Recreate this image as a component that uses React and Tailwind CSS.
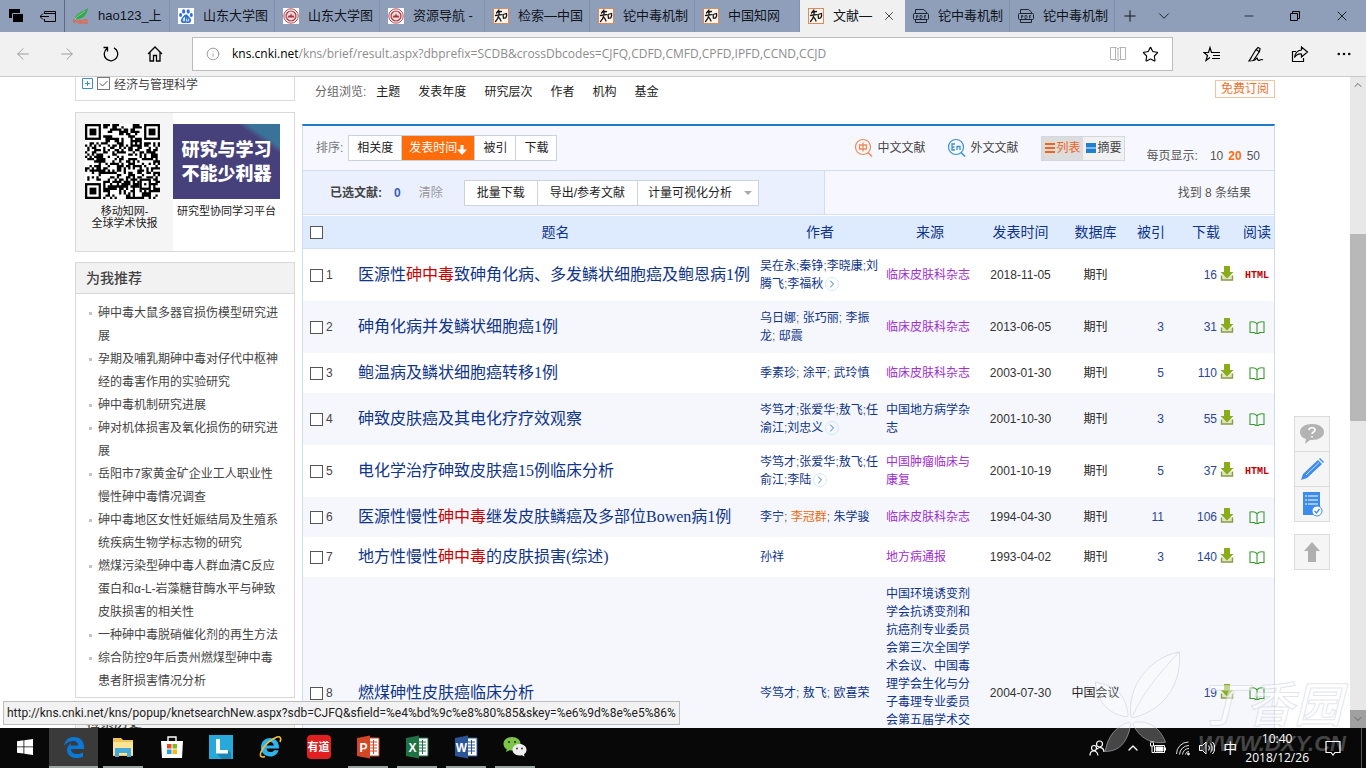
import { useState } from 'react';
import { ArrowLeft, ArrowRight, House, Info, Star, Plus, ChevronDown, ChevronUp, ChevronRight, Minus, X, Ellipsis } from 'lucide-react';

const TABS = [
  { icon: 'leaf', text: 'hao123_上' },
  { icon: 'baidu', text: '山东大学图' },
  { icon: 'seal', text: '山东大学图' },
  { icon: 'seal', text: '资源导航 -' },
  { icon: 'cnki', text: '检索—中国' },
  { icon: 'cnki', text: '铊中毒机制' },
  { icon: 'cnki', text: '中国知网' },
  { icon: 'cnki', text: '文献—', active: true },
  { icon: 'pdf', text: '铊中毒机制' },
  { icon: 'pdf', text: '铊中毒机制' },
];

const GROUPS = ['主题', '发表年度', '研究层次', '作者', '机构', '基金'];

const RECOMMENDED = [
  '砷中毒大鼠多器官损伤模型研究进展',
  '孕期及哺乳期砷中毒对仔代中枢神经的毒害作用的实验研究',
  '砷中毒机制研究进展',
  '砷对机体损害及氧化损伤的研究进展',
  '岳阳市7家黄金矿企业工人职业性慢性砷中毒情况调查',
  '砷中毒地区女性妊娠结局及生殖系统疾病生物学标志物的研究',
  '燃煤污染型砷中毒人群血清C反应蛋白和α-L-岩藻糖苷酶水平与砷致皮肤损害的相关性',
  '一种砷中毒脱硝催化剂的再生方法',
  '综合防控9年后贵州燃煤型砷中毒患者肝损害情况分析',
];

// text between asterisks is the highlighted keyword
const RESULTS = [
  { title: '医源性*砷中毒*致砷角化病、多发鳞状细胞癌及鲍恩病1例', authors: ['吴在永;秦铮;李晓康;刘', '腾飞;李福秋'], more: true, source: ['临床皮肤科杂志'], visited: true, date: '2018-11-05', db: '期刊', cited: '', down: 16, html: true },
  { title: '砷角化病并发鳞状细胞癌1例', authors: ['乌日娜; 张巧丽; 李振', '龙; 邸震'], source: ['临床皮肤科杂志'], visited: true, date: '2013-06-05', db: '期刊', cited: 3, down: 31 },
  { title: '鲍温病及鳞状细胞癌转移1例', authors: ['季素珍; 涂平; 武玲慎'], source: ['临床皮肤科杂志'], visited: true, date: '2003-01-30', db: '期刊', cited: 5, down: 110 },
  { title: '砷致皮肤癌及其电化疗疗效观察', authors: ['岑笃才;张爱华;敖飞;任', '渝江;刘忠义'], more: true, source: ['中国地方病学杂', '志'], date: '2001-10-30', db: '期刊', cited: 3, down: 55 },
  { title: '电化学治疗砷致皮肤癌15例临床分析', authors: ['岑笃才;张爱华;敖飞;任', '俞江;李陆'], more: true, source: ['中国肿瘤临床与', '康复'], visited: true, date: '2001-10-19', db: '期刊', cited: 5, down: 37, html: true },
  { title: '医源性慢性*砷中毒*继发皮肤鳞癌及多部位Bowen病1例', authors: ['李宁; 李冠群; 朱学骏'], source: ['临床皮肤科杂志'], visited: true, date: '1994-04-30', db: '期刊', cited: 11, down: 106 },
  { title: '地方性慢性*砷中毒*的皮肤损害(综述)', authors: ['孙祥'], source: ['地方病通报'], visited: true, date: '1993-04-02', db: '期刊', cited: 3, down: 140 },
  {
    title: '燃煤砷性皮肤癌临床分析',
    authors: ['岑笃才; 敖飞; 欧喜荣'],
    source: ['中国环境诱变剂', '学会抗诱变剂和', '抗癌剂专业委员', '会第三次全国学', '术会议、中国毒', '理学会生化与分', '子毒理专业委员', '会第五届学术交', '流会论文集'],
    date: '2004-07-30', db: '中国会议', cited: '', down: 19, tall: true,
  },
];

function TabIcon({ type }) {
  if (type === 'leaf') {
    return (
      <svg className="size-4 shrink-0" viewBox="0 0 16 16">
        <path d="M2 11C2 6 7 5 15 0c-1 7-5 12-13 11z" fill="#35a853" />
        <path d="M2 11c3-4 7-5 10-8" stroke="#8bd17c" fill="none" />
        <path d="M1 11v4M1 13h3v2M6 13h3v2H6zM11 12h3v3h-3z" stroke="#e06a50" strokeWidth="1.4" fill="none" />
      </svg>
    );
  }
  if (type === 'baidu') {
    return (
      <svg className="size-4 shrink-0" viewBox="0 0 16 16">
        <rect width="16" height="16" fill="#fff" />
        <g fill="#2f6fe0">
          <ellipse cx="5.6" cy="3.4" rx="1.6" ry="2.2" />
          <ellipse cx="10.2" cy="3.4" rx="1.6" ry="2.2" />
          <ellipse cx="2.6" cy="7" rx="1.5" ry="2" />
          <ellipse cx="13.3" cy="7" rx="1.5" ry="2" />
          <path d="M8 6.5c2 0 2.600 2 4 3.400 2.200 2 1 5.100-1.500 5.100-1 0-1.600-.3-2.500-.3s-1.500.3-2.500.3C3 15 1.800 12 4 9.900 5.400 8.500 6 6.500 8 6.500z" />
        </g>
        <path d="M6.500 9v4H5.300v-2.500h1.200M8.500 10.500V13h2.200v-2.500" stroke="#fff" strokeWidth=".8" fill="none" />
      </svg>
    );
  }
  if (type === 'seal') {
    return (
      <svg className="size-4 shrink-0" viewBox="0 0 16 16">
        <rect width="16" height="16" fill="#fff" />
        <circle cx="8" cy="8" r="7.200" fill="none" stroke="#b5444c" strokeWidth="1" />
        <circle cx="8" cy="8" r="5" fill="#f3dcdc" stroke="#a8323c" strokeWidth="1.200" />
        <path d="M4.500 9.500L6 7l1 1 1-3 1 3 1-1 1.500 2.500z" fill="#a8323c" />
      </svg>
    );
  }
  if (type === 'pdf') {
    return (
      <svg className="size-4 shrink-0" viewBox="0 0 16 16" fill="none" stroke="#1b2430" strokeWidth="1">
        <path d="M2.500 5V1.500h8L13.500 4v1M2.500 12v2.500h11V12" />
        <rect x=".5" y="5.500" width="15" height="6" rx="1" />
        <path d="M3.500 10.500v-3h1.300v1.500H3.500M7 7.500v3h1.200l.8-1V8l-.8-.5zM11.500 10.500v-3H13M11.500 9H13" strokeWidth=".8" />
      </svg>
    );
  }
  return (
    <svg className="size-4 shrink-0" viewBox="0 0 16 16">
      <rect x=".5" y=".5" width="15" height="15" fill="#fff6ee" stroke="#e08a5a" />
      <path d="M6 2L3.500 5M4.500 4l4-.500M2.500 7.500l6-.800M6.200 4C6 8 5 11 2.500 13.500M5.500 9c1 1 2 2.500 2.500 4M10 6.500l3.500-1c.5 1.500 0 3-.8 4.500L10.500 10.300z" stroke="#161616" strokeWidth="1.300" fill="none" strokeLinecap="round" />
    </svg>
  );
}

function TabBar() {
  return (
    <div className="flex h-8 shrink-0 bg-[#8f9fba] text-[#10151c]">
      <div className="flex w-[65px] shrink-0 items-center gap-4 border-r border-[#5d6a82] pl-2">
        <button aria-label="标签页" className="size-4">
          <svg viewBox="0 0 16 16" className="size-4">
            <path d="M1 1h11v9H1z" fill="#000" />
            <path d="M4.500 5.500h10v8h-10z" fill="#000" stroke="#8f9fba" />
            <path d="M5 6h10v8H5z" fill="#000" />
          </svg>
        </button>
        <button aria-label="搁置标签页" className="size-4">
          <svg viewBox="0 0 16 16" className="size-4" fill="none" stroke="#000">
            <path d="M4.500 6V3.500h11v10h-11V11M4.500 5.500h11M0 8.500h9M3 5.500l-3 3 3 3" />
          </svg>
        </button>
      </div>
      {TABS.map((tab, i) => (
        <button
          key={i}
          className={`flex w-[105px] min-w-0 items-center gap-[9px] border-r pl-2 text-[13px] ${tab.active ? 'border-[#f0f0f0] bg-[#f0f0f0]' : 'border-[#8091ae]'}`}
        >
          <TabIcon type={tab.icon} />
          <span className={`overflow-hidden text-left whitespace-nowrap ${tab.active ? 'w-10' : 'w-[66px]'}`}>{tab.text}</span>
          {tab.active && <X size={14} strokeWidth={1.3} className="shrink-0" />}
        </button>
      ))}
      <div className="flex grow items-center gap-4 pl-1.5">
        <button aria-label="新建标签页"><Plus size={18} strokeWidth={1.3} /></button>
        <button aria-label="标签页列表"><ChevronDown size={18} strokeWidth={1.2} /></button>
      </div>
      <div className="flex shrink-0 items-center gap-8 pr-4">
        <button aria-label="最小化"><Minus size={14} strokeWidth={1.4} /></button>
        <button aria-label="还原">
          <svg viewBox="0 0 14 14" className="size-3.5" fill="none" stroke="#000">
            <path d="M2.500 4.500h7v7h-7zM4.500 4.500v-2h7v7h-2" />
          </svg>
        </button>
        <button aria-label="关闭"><X size={16} strokeWidth={1.4} /></button>
      </div>
    </div>
  );
}

function AddressBar() {
  const [url, setUrl] = useState('/kns/brief/result.aspx?dbprefix=SCDB&crossDbcodes=CJFQ,CDFD,CMFD,CPFD,IPFD,CCND,CCJD');
  return (
    <div className="flex h-[45px] shrink-0 items-center border-b border-[#cbcbcb] bg-[#f1f1f1] pr-[13px] pl-[14px]">
      <div className="flex w-[178px] shrink-0 items-center gap-[26px]">
        <button aria-label="后退" className="text-[#9a9a9a]"><ArrowLeft size={18} strokeWidth={1.3} /></button>
        <button aria-label="前进" className="text-[#9a9a9a]"><ArrowRight size={18} strokeWidth={1.3} /></button>
        <button aria-label="刷新">
          <svg viewBox="0 0 18 18" className="size-[18px]" fill="none" stroke="#000" strokeWidth="1.300">
            <path d="M5 3.500A6.800 6.800 0 1 0 12 2.900M1.500 2.500h4v4" />
          </svg>
        </button>
        <button aria-label="主页">
          <svg viewBox="0 0 18 18" className="size-[18px]" fill="none" stroke="#000" strokeWidth="1.300">
            <path d="M2 9l7-7 7 7M4 7.500V16h3.500v-5.500h3V16H14V7.500" />
          </svg>
        </button>
      </div>
      <div className="flex h-[34px] grow items-center border border-[#bdbdbd] bg-white px-[13px] font-['Open_Sans',sans-serif] text-xs">
        <Info size={14} strokeWidth={1.2} className="mr-3 shrink-0 text-[#777]" />
        <label htmlFor="url" className="text-black">kns.cnki.net</label>
        <input id="url" value={url} onChange={e => setUrl(e.target.value)} className="min-w-0 grow text-[#8c8c8c] outline-none" />
        <button aria-label="阅读视图" className="mr-4">
          <svg viewBox="0 0 16 16" className="size-4" fill="none" stroke="#b4b4b4">
            <path d="M.500 1.500h6L8 3l1.500-1.500h6v12h-6L8 15l-1.500-1.500h-6zM8 3v11M5.500 2v11M10.500 2v11" />
          </svg>
        </button>
        <button aria-label="收藏"><Star size={17} strokeWidth={1.6} strokeLinejoin="miter" /></button>
      </div>
      <div className="ml-[30px] flex shrink-0 items-center gap-[26px]">
        <button aria-label="收藏夹">
          <svg viewBox="0 0 18 18" className="size-[18px]" fill="none" stroke="#000" strokeWidth="1.200">
            <path d="M10 7.500H8.500L7 2.500 5.500 7.500H1l3.500 3-1.500 5 4-3M10 7.500h7M10 10.500h7M9 13.500h8" />
          </svg>
        </button>
        <button aria-label="添加备注">
          <svg viewBox="0 0 18 18" className="size-[18px]" fill="none" stroke="#000" strokeWidth="1.200">
            <path d="M2 16L9 4.500l2-2 2 1-.500 3L6 16M4.500 12.500l-2.500 3.500c2 0 6-.500 7-2s1.500-1 1.500 0 1 2 2.500 1 2-.500 3 0M9 4.500l3 2" />
          </svg>
        </button>
        <button aria-label="共享">
          <svg viewBox="0 0 18 18" className="size-[18px]" fill="none" stroke="#000" strokeWidth="1.200">
            <path d="M5 6.500H1.500v10h11V13M10.500 5V2l6 5-6 5V9c-3-.500-5 .500-7 3.500C4 8 6.500 5.500 10.500 5z" />
          </svg>
        </button>
        <button aria-label="更多"><Ellipsis size={18} strokeWidth={1.4} /></button>
      </div>
    </div>
  );
}

// finder squares in three corners, the rest is a fixed pattern
function QrCode() {
  const n = 33;
  const cells = [];
  let seed = 77;
  for (let y = 0; y < n; y++) {
    for (let x = 0; x < n; x++) {
      seed = (seed * 1103515245 + 12345) % 2147483648;
      const corner = (x < 8 && y < 8) || (x > n - 9 && y < 8) || (x < 8 && y > n - 9);
      const align = x > 23 && x < 29 && y > 23 && y < 29;
      if (!corner && !align && seed / 2147483648 > 0.48) cells.push(`M${x} ${y}h1v1h-1z`);
    }
  }
  return (
    <svg viewBox="0 0 33 33" className="ml-[9px] size-[75px] self-start bg-white">
      <path d={cells.join('')} />
      {[[0, 0], [26, 0], [0, 26]].map(([x, y]) => (
        <g key={`${x}-${y}`}>
          <rect x={x + 0.5} y={y + 0.5} width="6" height="6" fill="none" stroke="#000" />
          <rect x={x + 2} y={y + 2} width="3" height="3" />
        </g>
      ))}
      <rect x="24.500" y="24.500" width="4" height="4" fill="none" stroke="#000" />
      <rect x="26" y="26" width="1" height="1" />
    </svg>
  );
}

function Sidebar() {
  return (
    <aside className="w-[220px] shrink-0">
      <div className="flex h-6 items-start gap-1 border border-t-0 border-[#d9d9e3] pl-1.5 text-[#444]">
        <button aria-label="展开" className="mt-px">
          <svg viewBox="0 0 11 11" className="size-[11px]" fill="none" stroke="#3a8fc4">
            <path d="M.500 .500h10v10H.500zM3 5.500h5M5.500 3v5" />
          </svg>
        </button>
        <label className="flex items-start gap-1">
          <span className="relative size-[13px]">
            <input type="checkbox" defaultChecked className="peer block size-[13px] appearance-none border border-[#777] bg-white" />
            <svg viewBox="0 0 13 13" className="pointer-events-none absolute inset-0 hidden size-[13px] peer-checked:block" fill="none" stroke="#555">
              <path d="M3 6.500l2.500 2.500L10.500 4" />
            </svg>
          </span>
          <span className="leading-4">经济与管理科学</span>
        </label>
      </div>

      <div className="mt-[11px] flex h-[140px] border border-[#d9d9d9] text-center text-[11px] leading-3 text-[#222]">
        <div className="w-[97px] bg-[#f5f5f5] pt-[11px]">
          <a href="#app" className="flex flex-col items-center gap-1.5">
            <QrCode />
            <span>移动知网-<br />全球学术快报</span>
          </a>
        </div>
        <a href="#platform" className="flex flex-col items-center gap-1.5 pt-[11px]">
          <span className="flex h-[75px] w-[107px] flex-col justify-center bg-linear-to-bl from-[#3a739a] from-15% to-[#46417a] to-20% text-lg leading-6 font-black text-white">
            <span>研究与学习</span>
            <span>不能少利器</span>
          </span>
          <span>研究型协同学习平台</span>
        </a>
      </div>

      <section className="mt-2.5 border border-[#d9d9d9]">
        <h2 className="h-[31px] border-b border-[#d9d9d9] bg-[#f2f2f2] pl-2.5 text-sm leading-[31px] font-medium text-[#444]">为我推荐</h2>
        <ul className="pt-2 pr-[13px] pb-1 pl-[13px] leading-[23px] text-[#444]">
          {RECOMMENDED.map(text => (
            <li key={text} className="flex gap-1.5">
              <span className="mt-2.5 size-[3px] shrink-0 bg-[#c4c4c4]" />
              <a href="#item">{text}</a>
            </li>
          ))}
        </ul>
      </section>

      <section className="mt-2 border border-[#d9d9d9]">
        <h2 className="h-[31px] bg-[#f2f2f2] pl-2.5 text-sm leading-[31px] font-medium text-[#444]">检索历史</h2>
      </section>
    </aside>
  );
}

function LangIcon({ color, children }) {
  return (
    <svg viewBox="0 0 20 20" className="size-5" fill="none" stroke={color}>
      <circle cx="9" cy="9" r="7.500" strokeWidth="1.200" />
      <path d="M14 14.500l4 4" strokeWidth="1.600" />
      {children}
    </svg>
  );
}

function Toolbar() {
  return (
    <div className="text-[#222]">
      <div className="flex h-[45px] items-center border-b border-[#d5deee] bg-[#f7f8ff] pr-3.5 pl-[13px]">
        <span className="mr-[5px] text-[#777]">排序:</span>
        <div className="flex h-[26px] divide-x divide-[#ccd3dd] border border-[#ccd3dd] bg-white">
          <button className="px-2">相关度</button>
          <button className="flex items-center bg-[#ff6c0a] px-[7px] text-white">
            发表时间
            <svg viewBox="0 0 10 10" className="mt-1 h-2.5 w-2.5" fill="#fff"><path d="M3.500 0h3v4.500H10L5 10 0 4.500h3.500z" /></svg>
          </button>
          <button className="px-2">被引</button>
          <button className="px-2">下载</button>
        </div>
        <div className="ml-auto flex items-center text-[#444]">
          <a href="#cn" className="mr-[21px] flex items-center gap-1">
            <LangIcon color="#ef8a55"><path d="M5.500 7h7v4h-7zM9 4.500v9" strokeWidth="1.300" /></LangIcon>
            中文文献
          </a>
          <a href="#en" className="mr-[22px] flex items-center gap-1">
            <LangIcon color="#3b8ed0"><path d="M8 6H5v6h3M5 9h2.500M10 12V8.500h3V12" strokeWidth="1.300" /></LangIcon>
            外文文献
          </a>
          <div className="mr-[22px] flex h-[25px] border border-[#d3d8e0]">
            <button className="flex items-center gap-px bg-[#dcdcdc] px-0.5 text-[#f0641e]">
              <svg viewBox="0 0 12 12" className="size-3" fill="#f0641e"><path d="M1 1h10v2H1zM1 5h10v2H1zM1 9h10v2H1z" /></svg>
              列表
            </button>
            <button className="flex items-center gap-px bg-[#f1f1f1] px-0.5">
              <svg viewBox="0 0 12 12" className="size-3" fill="#1f7fd0"><path d="M1 1h10v4.500H1zM1 6.500h10V11H1z" /></svg>
              摘要
            </button>
          </div>
          <div className="mt-4 flex gap-[5px] text-[#555]">
            <span className="mr-[7px]">每页显示:</span>
            <a href="#10">10</a>
            <a href="#20" className="font-bold text-[#ff6c0a]">20</a>
            <a href="#50">50</a>
          </div>
        </div>
      </div>
      <div className="flex h-11 border-b border-[#d5deee] bg-[#f7f8ff]">
        <div className="flex w-[522px] items-center border-r border-[#d5deee] bg-[#ebf0ff] pl-[27px]">
          <span className="font-bold text-[#444]">已选文献:</span>
          <span className="mr-[18px] ml-3 font-bold text-[#3a5bbf]">0</span>
          <button className="mr-[21px] text-[#999]">清除</button>
          <div className="flex h-[26px] divide-x divide-[#ccd3dd] border border-[#ccd3dd] bg-white">
            <button className="px-3">批量下载</button>
            <button className="px-3">导出/参考文献</button>
            <button className="flex items-center gap-3 pr-1.5 pl-2.5">
              计量可视化分析
              <span className="border-4 border-b-0 border-transparent border-t-[#aaa]" />
            </button>
          </div>
        </div>
        <div className="grow self-center pr-[23px] text-right text-[#555]">找到 8 条结果</div>
      </div>
    </div>
  );
}

function Title({ text }) {
  return text.split('*').map((part, i) => (
    i % 2 ? <span key={i} className="text-[#cc0000]">{part}</span> : part
  ));
}

function AuthorLine({ line }) {
  return line.split(';').map((name, i, all) => (
    <span key={i}>
      <a href="#author" className={name.trim() === '李冠群' ? 'text-[#ee6a0c]' : ''}>{name}</a>
      {i < all.length - 1 && <span className="text-[#666]">;</span>}
    </span>
  ));
}

function ResultTable() {
  return (
    <table className="w-full table-fixed border-collapse text-left leading-[18px] text-[#0f3488]">
      <colgroup>
        <col className="w-[54px]" />
        <col />
        <col className="w-[126px]" />
        <col className="w-[100px]" />
        <col className="w-[81px]" />
        <col className="w-[69px]" />
        <col className="w-[42px]" />
        <col className="w-[68px]" />
        <col className="w-[34px]" />
      </colgroup>
      <thead className="border-t border-white bg-[#deebff] text-sm">
        <tr className="h-[33px] border-b border-[#d5deee]">
          <th className="pl-[7px]">
            <input type="checkbox" aria-label="全选" className="block size-[13px] appearance-none border border-[#555] bg-white checked:bg-[#555]" />
          </th>
          {['题名', '作者', '来源', '发表时间', '数据库', '被引', '下载', '阅读'].map(h => (
            <th key={h} className={`text-center font-normal ${h === '作者' ? 'pl-1.5' : ''}`}>{h}</th>
          ))}
        </tr>
      </thead>
      <tbody>
        {RESULTS.map((r, i) => (
          <tr key={r.title} className={`${i % 2 ? 'bg-[#f5f7fd]' : 'bg-white'} ${r.tall ? 'h-[232px]' : ''}`}>
            <td className="pl-[7px]">
              <label className="flex items-center gap-[3px] text-[#444]">
                <input type="checkbox" className="size-[13px] appearance-none border border-[#555] bg-white checked:bg-[#555]" />
                {i + 1}
              </label>
            </td>
            <td className="py-2 pl-px font-['Liberation_Serif','Noto_Sans_CJK_SC',sans-serif] text-base leading-6 whitespace-nowrap">
              <a href="#title"><Title text={r.title} /></a>
            </td>
            <td className="py-2 pl-1.5 whitespace-nowrap">
              {r.authors.map((line, k) => (
                <div key={line} className="flex items-center">
                  <span className="whitespace-pre"><AuthorLine line={line} /></span>
                  {r.more && k === r.authors.length - 1 && (
                    <button aria-label="更多作者" className="ml-0.5 rounded-full border border-[#d6e8f5] text-[#2a7fb8]"><ChevronRight size={12} /></button>
                  )}
                </div>
              ))}
            </td>
            <td className={`py-2 pl-1.5 whitespace-nowrap ${r.tall ? 'align-top' : ''}`}>
              <a href="#source" className={r.visited ? 'text-[#a030d0]' : ''}>
                {r.source.map(line => <span key={line} className="block">{line}</span>)}
              </a>
            </td>
            <td className="text-center text-[#333]">{r.date}</td>
            <td className="text-center whitespace-nowrap text-[#222]">{r.db}</td>
            <td className="pr-2 text-right"><a href="#cited" className="text-[#2c4694]">{r.cited}</a></td>
            <td className="pr-1.5">
              <a href="#download" className="flex items-center justify-end gap-[3px] text-[#2c4694]">
                {r.down}
                <svg viewBox="0 0 14 16" className="mb-1 h-4 w-3.5">
                  <path d="M1.500 10.500V15h11v-4.500" fill="#dfe6c0" stroke="#8a9a4a" strokeWidth="1.400" />
                  <path d="M4 1h6v6h3.500L7 13.500 .500 7H4z" fill="#8aac1c" />
                </svg>
              </a>
            </td>
            <td className="text-center">
              {r.html ? (
                <a href="#html" className="font-['Liberation_Mono',monospace] text-[10px] font-bold text-[#c00000]">HTML</a>
              ) : (
                <a href="#read" aria-label="阅读" className="flex justify-center">
                  <svg viewBox="0 0 16 13" className="h-[13px] w-4" fill="none" stroke="#3a9a2e" strokeWidth="1.100">
                    <path d="M8 3C7 1 4 .500 1 1v10.500h4.500l1 1h3l1-1H15V1c-3-.500-6 0-7 2zM8 3v9.500" />
                  </svg>
                </a>
              )}
            </td>
          </tr>
        ))}
      </tbody>
    </table>
  );
}

function Results() {
  return (
    <main className="min-w-0 grow">
      <div className="flex h-[47px] items-start pt-[3px] pl-[13px]">
        <div className="mt-1 flex leading-4 text-[#222]">
          <span className="mr-2.5 text-[#666]">分组浏览:</span>
          <div className="flex gap-[18px]">
            {GROUPS.map(g => <a key={g} href="#group">{g}</a>)}
          </div>
        </div>
        <a href="#subscribe" className="ml-auto border border-[#f3c3a2] px-[5px] leading-4 text-[#f0702c]">免费订阅</a>
      </div>
      <div className="border-x border-t-2 border-x-[#cfdcee] border-t-[#1f7bc8]">
        <Toolbar />
        <ResultTable />
      </div>
    </main>
  );
}

function FloatingTools() {
  const box = 'flex size-9 items-center justify-center border border-[#dcdcdc] bg-[#f5f5f5]';
  return (
    <div className="absolute top-[339px] right-5 flex flex-col">
      <button aria-label="咨询" className={box}>
        <svg viewBox="0 0 26 22" className="h-[22px] w-[26px]">
          <path d="M13 1c7 0 12 3.500 12 8s-5 8-12 8h-2l-5 4 1-5C3 15 1 12 1 9c0-4.500 5-8 12-8z" fill="#b3b3b3" />
          <path d="M10 7c0-3 6-3 6 0 0 2-3 2-3 4M13 13v1.500" fill="none" stroke="#fff" strokeWidth="1.600" />
        </svg>
      </button>
      <button aria-label="反馈" className={`${box} -mt-px`}>
        <svg viewBox="0 0 24 24" className="size-6" fill="#3d8bee">
          <path d="M1 23l2-6L18 3l4 4L7 21zM19 2l1-1 4 4-1 1z" />
          <path d="M6 18L19 5.500" stroke="#f5f5f5" strokeWidth=".8" />
        </svg>
      </button>
      <button aria-label="订阅" className={`${box} -mt-px`}>
        <svg viewBox="0 0 22 26" className="h-[26px] w-[22px]">
          <path d="M2 1h17v23H2z" fill="#3d8bee" />
          <path d="M4 5h2m1 0h10M4 9h2m1 0h10M4 13h2m1 0h10" stroke="#fff" />
          <circle cx="16" cy="20" r="5" fill="#fff" stroke="#3d8bee" />
          <path d="M13.500 20l2 2 3-4" fill="none" stroke="#3d8bee" strokeWidth="1.300" />
        </svg>
      </button>
      <button aria-label="返回顶部" className={`${box} mt-3`}>
        <svg viewBox="0 0 18 22" className="h-[22px] w-[18px]" fill="#b0b0b0"><path d="M9 1l8 9h-4v11H5V10H1z" /></svg>
      </button>
    </div>
  );
}

function Scrollbar() {
  return (
    <div className="flex w-4 shrink-0 flex-col bg-[#e8e8e8] text-[#666]">
      <div className="flex h-4 shrink-0 items-center justify-center"><ChevronUp size={12} /></div>
      <div className="mt-[141px] h-[187px] bg-[#b8b8b8]" />
      <div className="mt-auto flex h-[18px] shrink-0 items-center justify-center bg-[#a0a0a0]"><ChevronDown size={12} /></div>
    </div>
  );
}

function Watermark() {
  return (
    <div className="pointer-events-none absolute right-5 bottom-3 z-20 flex items-end gap-2">
      <svg viewBox="0 0 100 115" className="h-[105px] w-[100px]" fill="#fff" fillOpacity=".25" stroke="#c9ccd4" strokeOpacity=".6">
        <path d="M40 72C36 40 58 8 93 1c3 30-12 62-50 72zM42 71C52 48 70 25 93 1M37 70C34 46 22 38 1 34c2 20 14 36 35 38z" />
        <path d="M38 78c-14 4-24 16-26 32 14 0 24-8 28-30zM44 78c16-2 28 6 34 22-16 2-28-4-36-20z" />
      </svg>
      <div className="font-['Liberation_Sans','Noto_Sans_CJK_SC',sans-serif] italic">
        <div className="text-5xl leading-[52px] font-medium text-white/50 [-webkit-text-stroke:1px_#c8ccd580]">丁香园</div>
        <div className="text-[22px] leading-6 font-bold text-white/25">WWW.DXY.CN</div>
      </div>
    </div>
  );
}

function OfficeIcon({ letter, color }) {
  return (
    <svg viewBox="0 0 24 24" className="size-6">
      <path d="M12 3h11v18H12z" fill="#fff" stroke={color} />
      <path d="M14 7h7M14 10h7M14 13h7M14 16h7M17.500 5v14" stroke={color} />
      <path d="M1 3l13-2.500v23L1 21z" fill={color} />
      <text x="7.500" y="16.500" textAnchor="middle" fontSize="12" fontWeight="bold" fill="#fff">{letter}</text>
    </svg>
  );
}

const APPS = [
  { name: '开始', icon: <svg viewBox="0 0 16 16" className="size-4" fill="#fff"><path d="M0 2.200l6.500-.9v6.200H0zM7.300 1.200L16 0v7.500H7.300zM0 8.300h6.500v6.300L0 13.700zM7.300 8.300H16V16l-8.700-1.200z" /></svg> },
  { name: 'Edge', active: true, open: true, icon: <svg viewBox="0 0 22 22" className="size-[22px]"><path d="M1 10C2 4 6 1 11 1c6 0 10 4 10 10v2H8c0 3 2 5 6 5 2 0 4-.500 6-1.500v4c-2 1-4 1.500-7 1.500-6 0-9-4-9-8 0-3 2-6 5-7.500C7.500 8 7.500 9 7.500 9.500h7.500c0-3-1.500-4.500-4.500-4.500C6.500 5 3 7 1 10z" fill="#0a78d7" /></svg> },
  { name: '文件资源管理器', open: true, icon: <svg viewBox="0 0 24 22" className="h-[22px] w-6"><path d="M2 2h8l2 2h10v16H2z" fill="#f0c456" /><path d="M2 6h20v13H2z" fill="#fde395" /><path d="M4 12h16v9h-4v-4H8v4H4z" fill="#46a9dc" /></svg> },
  { name: '应用商店', icon: <svg viewBox="0 0 24 24" className="size-6"><path d="M8 7V2h8v5" fill="none" stroke="#fff" strokeWidth="1.400" /><path d="M1 6h22l-1 17H2z" fill="#fff" /><path d="M7 9h4.500v4.500H7z" fill="#e84a27" /><path d="M12.500 9H17v4.500h-4.500z" fill="#7db928" /><path d="M7 14.500h4.500V19H7z" fill="#1fa1e3" /><path d="M12.500 14.500H17V19h-4.500z" fill="#fbb813" /></svg> },
  { name: 'Lingoes', icon: <svg viewBox="0 0 24 24" className="size-6"><path d="M0 0h24v24H0z" fill="#27a9dc" /><path d="M11 15h8l3 3v6h-9l-6-6z" fill="#1c86b4" /><path d="M7 4h4v11h8v3.500H7z" fill="#fff" /></svg> },
  { name: 'Internet Explorer', icon: <svg viewBox="0 0 24 24" className="size-6"><path d="M12 3c5.500 0 9 4 9 9.500v1H8.500c.3 2.500 1.800 3.500 4 3.500 1.800 0 2.800-.5 3.500-1.800h4.600C19.500 19 16.500 21.500 12.300 21.500 7 21.500 3 18 3 12.300S7 3 12 3zm-3.500 7.500h7.300C15.500 8.200 14.200 7 12.200 7s-3.400 1.200-3.700 3.500z" fill="#2fb3ee" /><path d="M22 7c1.500-3.500.5-6-3-5-5 1.500-13 8-16 15-1.500 4 0 6 4 4.500" fill="none" stroke="#f5c02c" strokeWidth="1.600" /></svg> },
  { name: '有道', icon: <span className="flex size-6 items-center justify-center rounded bg-[#e02020] text-[11px] font-bold text-white">有道</span> },
  { name: 'PowerPoint', open: true, icon: <OfficeIcon letter="P" color="#d24726" /> },
  { name: 'Excel', open: true, icon: <OfficeIcon letter="X" color="#1f7244" /> },
  { name: 'Word', open: true, icon: <OfficeIcon letter="W" color="#2a5699" /> },
  { name: '微信', open: true, icon: <svg viewBox="0 0 24 24" className="size-6"><path d="M9 2c5 0 8.500 3 8.500 6.700S14 15.500 9 15.500l-2.500-.300L3 17l.800-2.800C1.500 13 .500 11 .500 8.700.500 5 4 2 9 2z" fill="#7bc549" /><path d="M16.500 9c4 0 7 2.500 7 5.800 0 2-1 3.500-2.500 4.500l.500 2.200-2.700-1.300c-5 1.300-9.300-1.500-9.300-5.400C9.500 11.500 12.500 9 16.500 9z" fill="#eee" /><g fill="#333"><circle cx="6" cy="7" r="1.100" /><circle cx="12" cy="7" r="1.100" /><circle cx="14" cy="13.500" r=".9" /><circle cx="19" cy="13.500" r=".9" /></g></svg> },
];

function Taskbar() {
  return (
    <div className="flex h-10 shrink-0 items-stretch bg-[#080808] text-white">
      {APPS.map(app => (
        <button key={app.name} aria-label={app.name} className={`flex w-[49px] flex-col items-center ${app.active ? 'bg-[#3a3a3a]' : ''}`}>
          <span className="flex grow items-center">{app.icon}</span>
          <span className={`h-0.5 ${app.active ? 'w-full' : 'w-10'} ${app.open ? 'bg-[#9aa3a0]' : ''}`} />
        </button>
      ))}
      <div className="ml-auto flex items-center gap-2 pr-1">
        <svg viewBox="0 0 16 16" className="mr-3 size-4" fill="none" stroke="#fff" strokeWidth="1.200">
          <circle cx="10.500" cy="4" r="3" /><circle cx="5" cy="8" r="2.500" />
          <path d="M1 15.500c0-6 7-6 8 0M8 9c3-3 7-1 7 3" />
        </svg>
        <ChevronUp size={16} strokeWidth={2} />
        <svg viewBox="0 0 18 16" className="h-4 w-[18px]" fill="none" stroke="#fff">
          <path d="M5.500 5.500h10v7h-10zM16.500 7.500v3M1.500 3v3h3V3M2 1v2M4 1v2M3 6v6.500h2" />
          <path d="M7 7h7v4H7z" fill="#fff" />
        </svg>
        <svg viewBox="0 0 16 16" className="size-4" fill="none" stroke="#ddd">
          <path d="M1.500 14A12 12 0 0 1 13.500 2M4.500 14.500a9.500 9.500 0 0 1 9.500-9M7.500 14.500A6.500 6.500 0 0 1 14 8.500M10.500 14.500a3.500 3.500 0 0 1 3.500-3" />
          <circle cx="13.500" cy="14" r="1" fill="#fff" />
        </svg>
        <svg viewBox="0 0 16 16" className="size-4" fill="none" stroke="#fff">
          <path d="M.500 5.500h3L7 2v12l-3.500-3.500h-3zM9.500 5.500a4 4 0 0 1 0 5M11.500 3.500a7 7 0 0 1 0 9M13.500 2a9 9 0 0 1 0 12" />
        </svg>
        <span className="text-sm">中</span>
        <div className="text-center font-['Open_Sans',sans-serif] text-xs leading-[19px]">
          10:40<br />2018/12/26
        </div>
        <svg viewBox="0 0 16 16" className="ml-2 size-4" fill="none" stroke="#fff" strokeWidth="1.200"><path d="M1 1.500h14v11h-5L8 15l-2-2.500H1z" /></svg>
        <span className="ml-3 h-10 w-px bg-[#555]" />
      </div>
    </div>
  );
}

export default function App() {
  return (
    <div className="relative flex h-screen flex-col overflow-hidden bg-white font-['Liberation_Sans','Noto_Sans_CJK_SC',sans-serif] text-xs">
      <TabBar />
      <AddressBar />
      <div className="relative flex min-h-0 grow">
        <div className="relative min-w-0 grow overflow-hidden">
          <div className="mx-auto flex max-w-[1200px] gap-[7px]">
            <Sidebar />
            <Results />
          </div>
          <FloatingTools />
        </div>
        <Scrollbar />
        <div className="absolute bottom-[3px] left-[3px] border border-[#bdbdbd] bg-[#f2f2f2] px-[3px] font-['Roboto',sans-serif] leading-[22px] whitespace-nowrap text-[#222]">
          http://kns.cnki.net/kns/popup/knetsearchNew.aspx?sdb=CJFQ&amp;sfield=%e4%bd%9c%e8%80%85&amp;skey=%e6%9d%8e%e5%86%
        </div>
      </div>
      <Taskbar />
      <Watermark />
    </div>
  );
}
